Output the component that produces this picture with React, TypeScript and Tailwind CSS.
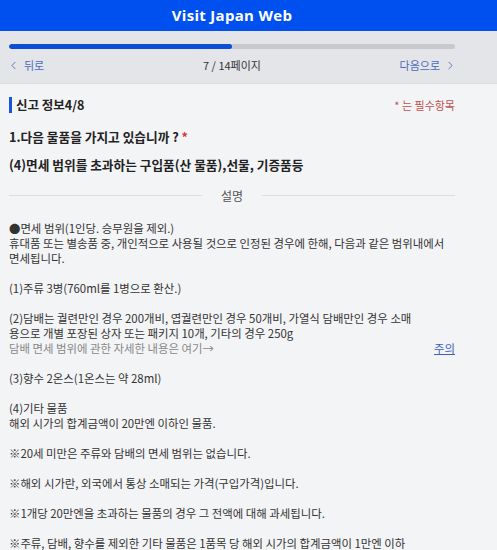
import { ChevronLeft, ChevronRight } from "lucide-react";

const body = "font-['Noto_Sans_CJK_KR',sans-serif]";

export default function App() {
  return (
    <div className={`min-h-[550px] bg-[#f3f4f6] ${body}`}>
      {/* Header */}
      <header className="h-[31px] bg-[#0050ef] flex items-center justify-center pr-[33px]">
        <span className="font-['Open_Sans',sans-serif] font-bold text-[15px] text-white tracking-[0.3px]">
          Visit Japan Web
        </span>
      </header>

      {/* Progress + navigation */}
      <div className="bg-[#e4e5e8] border-b border-[#dcdde0] pl-[9px] pr-[42px] pt-[13px] h-[53px]">
        <div className="h-[5px] rounded-full bg-[#c8c9cc] overflow-hidden">
          <div className="h-full w-1/2 rounded-full bg-[#0b4fd6]" />
        </div>
        <div className="grid grid-cols-3 items-center mt-[9px] text-[11px] leading-[14px]">
          <button className="flex items-center gap-[4px] text-[#4b68bd] justify-self-start">
            <ChevronLeft size={13} strokeWidth={1.6} className="-ml-[2px]" />
            뒤로
          </button>
          <span className="text-[#333] text-center">7 / 14페이지</span>
          <button className="flex items-center gap-[4px] text-[#4b68bd] justify-self-end">
            다음으로
            <ChevronRight size={13} strokeWidth={1.6} className="-mr-[2px]" />
          </button>
        </div>
      </div>

      {/* Content */}
      <main className="pl-[9px] pr-[42px] pt-[13px]">
        <div className="flex items-center justify-between">
          <h2 className="border-l-[3px] border-[#1a56db] pl-[4px] text-[12.5px] leading-[16px] font-bold text-[#222]">
            신고 정보4/8
          </h2>
          <span className="text-[11px] text-[#c0504d]">* 는 필수항목</span>
        </div>

        <p className="mt-[15px] text-[12.7px] leading-[16px] font-bold text-[#222]">
          1.다음 물품을 가지고 있습니까 ? <span className="text-[#d9363e]">*</span>
        </p>
        <p className="mt-[12px] text-[12.7px] leading-[16px] font-bold text-[#222]">
          (4)면세 범위를 초과하는 구입품(산 물품),선물, 기증품등
        </p>

        <div className="mt-[14px] flex items-center gap-[19px]">
          <div className="flex-1 h-px bg-[#dcdde0]" />
          <span className="text-[12px] text-[#555]">설명</span>
          <div className="flex-1 h-px bg-[#dcdde0]" />
        </div>

        <div className="mt-[16px] text-[11.4px] leading-[15px] text-[#333] break-keep">
          <p>●면세 범위(1인당. 승무원을 제외.)</p>
          <p>휴대품 또는 별송품 중, 개인적으로 사용될 것으로 인정된 경우에 한해, 다음과 같은 범위내에서 면세됩니다.</p>
          <br />
          <p>(1)주류 3병(760ml를 1병으로 환산.)</p>
          <br />
          <p>
            (2)담배는 궐련만인 경우 200개비, 엽궐련만인 경우 50개비, 가열식 담배만인 경우 소매
            <br />
            용으로 개별 포장된 상자 또는 패키지 10개, 기타의 경우 250g
          </p>
          <div className="flex justify-between">
            <span className="text-[#888]">담배 면세 범위에 관한 자세한 내용은 여기→</span>
            <a className="text-[#3b62c4] underline">주의</a>
          </div>
          <br />
          <p>(3)향수 2온스(1온스는 약 28ml)</p>
          <br />
          <p>(4)기타 물품</p>
          <p>해외 시가의 합계금액이 20만엔 이하인 물품.</p>
          <br />
          <p>※20세 미만은 주류와 담배의 면세 범위는 없습니다.</p>
          <br />
          <p>※해외 시가란, 외국에서 통상 소매되는 가격(구입가격)입니다.</p>
          <br />
          <p>※1개당 20만엔을 초과하는 물품의 경우 그 전액에 대해 과세됩니다.</p>
          <br />
          <p>※주류, 담배, 향수를 제외한 기타 물품은 1품목 당 해외 시가의 합계금액이 1만엔 이하</p>
        </div>
      </main>
    </div>
  );
}
